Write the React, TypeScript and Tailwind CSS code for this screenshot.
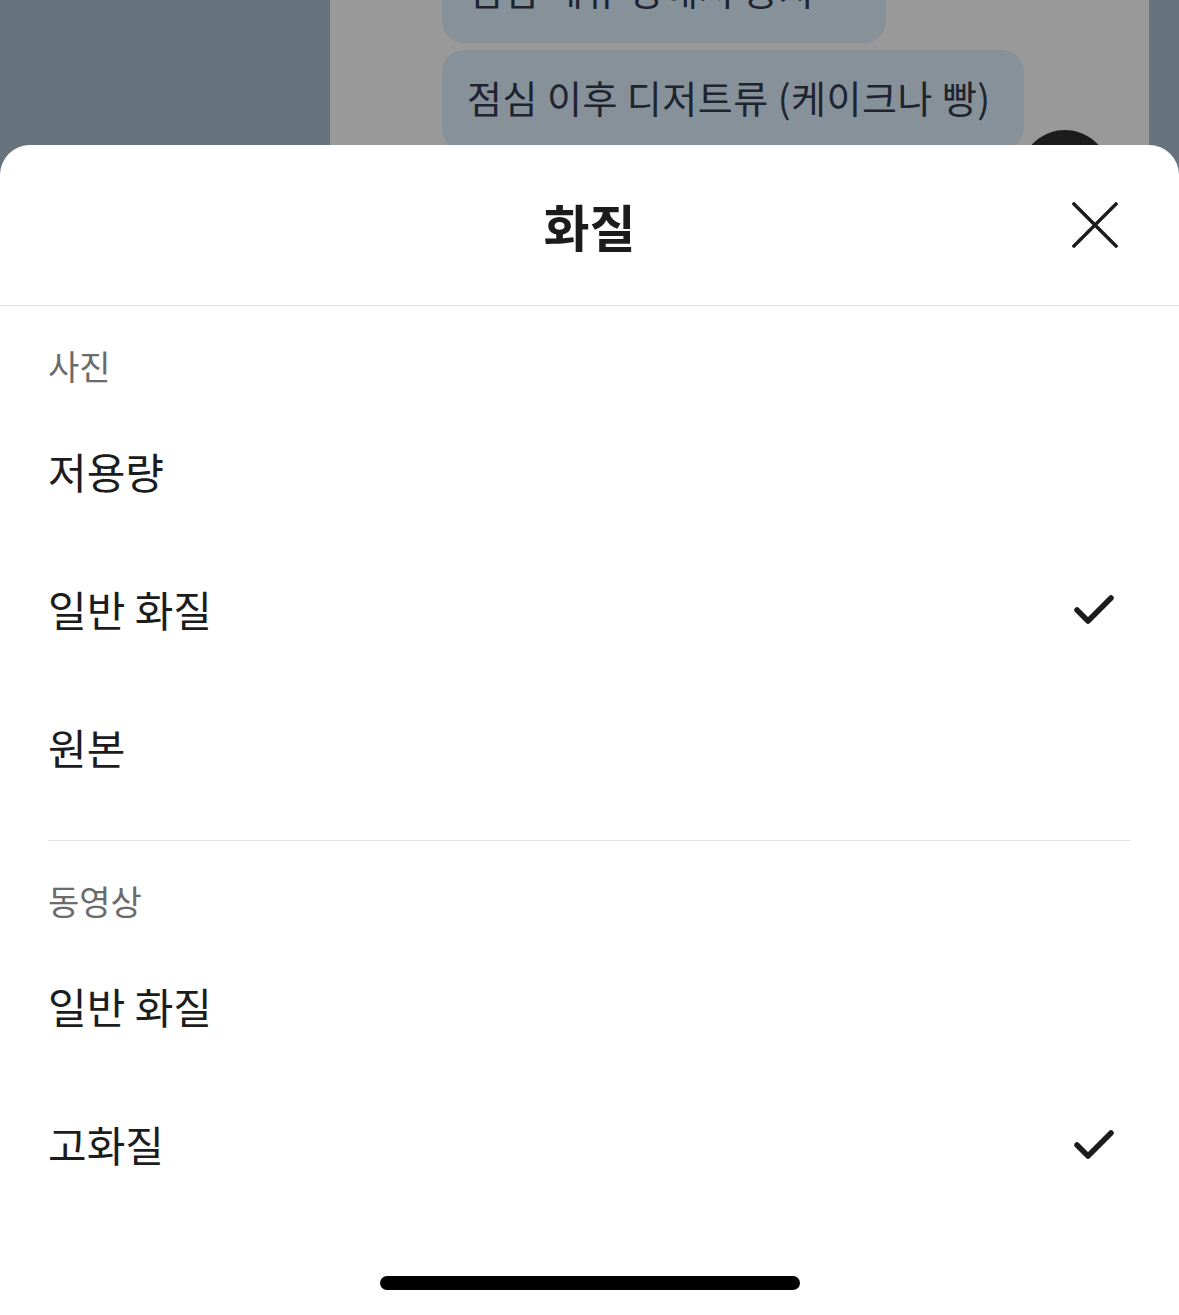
import React from "react";

const font = { fontFamily: '"Noto Sans CJK KR", "Noto Sans", sans-serif' };

function Check() {
  return (
    <svg width="44" height="36" viewBox="0 0 44 36" fill="none">
      <path d="M5 19 L16 30 L39 7" stroke="#1c1c1c" strokeWidth="5.5" strokeLinecap="round" strokeLinejoin="round" />
    </svg>
  );
}

function CloseIcon() {
  return (
    <svg width="46" height="46" viewBox="0 0 46 46" fill="none">
      <path d="M2 2 L44 44 M44 2 L2 44" stroke="#1c1c1c" strokeWidth="3.4" strokeLinecap="square" />
    </svg>
  );
}

function Row({ label, checked }: { label: string; checked?: boolean }) {
  return (
    <div className="flex h-[138px] items-center justify-between pl-[48px] pr-[63px]">
      <span className="text-[42px] leading-none text-[#1c1c1c]">{label}</span>
      {checked && <Check />}
    </div>
  );
}

function SectionLabel({ label }: { label: string }) {
  return (
    <div className="flex h-[40px] items-center pl-[48px] text-[34px] leading-none text-[#6b6b6b]">{label}</div>
  );
}

export default function App() {
  return (
    <div className="relative flex h-[1315px] w-full flex-col overflow-hidden bg-white" style={font}>
      {/* background chat */}
      <div className="relative flex h-[175px] shrink-0 overflow-hidden">
        <div className="w-[330px] bg-[#66737c]" />
        <div className="flex flex-1 flex-col bg-[#999999] pl-[112px]">
          <div className="-mt-[66px] flex h-[109px] w-[444px] items-center rounded-[22px] bg-[#87919a] px-[26px] text-[38px] tracking-[0.5px] text-[#1e2430]">
            점심 메뉴 정해서 공지
          </div>
          <div className="mt-[7px] flex h-[100px] w-[582px] items-center rounded-[22px] bg-[#87919a] px-[25px] pb-[8px] text-[38px] tracking-[0.5px] text-[#1e2430]">
            점심 이후 디저트류 (케이크나 빵)
          </div>
        </div>
        <div className="w-[30px] bg-[#66737c]" />
        <div className="absolute left-[1020px] top-[130px] h-[90px] w-[90px] rounded-full bg-[#1c1c1c]" />
      </div>

      {/* sheet */}
      <div className="relative z-10 -mt-[30px] flex flex-1 flex-col rounded-t-[30px] bg-white">
        <div className="relative flex h-[161px] items-center justify-center border-b border-[#e2e2e2]">
          <span className="text-[50px] font-bold leading-none text-[#1c1c1c]">화질</span>
          <div className="absolute right-[61px] top-[57px]">
            <CloseIcon />
          </div>
        </div>

        <div className="pt-[40px]">
          <SectionLabel label="사진" />
          <div className="h-[16px]" />
          <Row label="저용량" />
          <Row label="일반 화질" checked />
          <Row label="원본" />
        </div>
        <div className="mx-[48px] mt-[24px] border-t border-[#e2e2e2]" />
        <div className="pt-[40px]">
          <SectionLabel label="동영상" />
          <div className="h-[16px]" />
          <Row label="일반 화질" />
          <Row label="고화질" checked />
        </div>

        <div className="mt-auto flex justify-center pb-[25px]">
          <div className="h-[14px] w-[420px] rounded-full bg-black" />
        </div>
      </div>
    </div>
  );
}
